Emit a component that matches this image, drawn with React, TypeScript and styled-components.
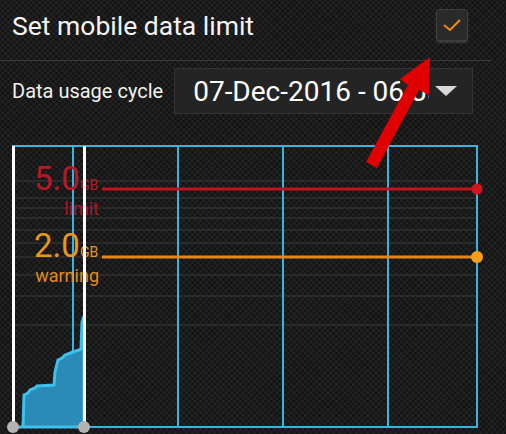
import styled, { createGlobalStyle } from "styled-components";

const GlobalStyle = createGlobalStyle`
  html, body {
    margin: 0;
    padding: 0;
    background: #1a1a1a;
  }
  * {
    box-sizing: border-box;
  }
`;

const gridRows = [181, 198, 208, 218, 230, 243, 257, 275, 296, 325];
const gridCols = [73, 178, 283, 388];

const usagePath =
    "M18,427 L23,427 L24,395 L28,393 L30,390 L35,388 L37,386 L54,385 L55,372 L58,360 L62,358 L65,355 L73,352 L79,350 L81,349 L82,322 L84,316 L84,427 Z";

export default function App(): JSX.Element {
    return (
        <Page>
            <GlobalStyle />
            <Header>
                <Title>Set mobile data limit</Title>
                <CheckBox>
                    <svg width="20" height="14" viewBox="0 0 20 14">
                        <polyline points="2,7 8,12 18,2" fill="none" stroke="#f08a1c" strokeWidth="2" />
                    </svg>
                </CheckBox>
            </Header>
            <CycleRow>
                <CycleLabel>Data usage cycle</CycleLabel>
                <Dropdown>
                    <DropdownText>07-Dec-2016 - 06-Jan-2017</DropdownText>
                    <Caret />
                </Dropdown>
            </CycleRow>
            <Chart>
                <svg width="506" height="294" viewBox="0 140 506 294">
                    {gridRows.map((y) => (
                        <line key={y} x1="13" x2="477" y1={y} y2={y} stroke="#3a3a3a" strokeWidth="1" />
                    ))}
                    <rect x="13" y="146" width="464" height="281" fill="none" stroke="#3cb2df" strokeWidth="2" />
                    {gridCols.map((x) => (
                        <line key={x} x1={x} x2={x} y1="146" y2="427" stroke="#3cb2df" strokeWidth="2" />
                    ))}
                    <path d={usagePath} fill="#2a8bb6" stroke="#3ec0ee" strokeWidth="3" strokeLinejoin="miter" />

                    <line x1="102" x2="477" y1="189" y2="189" stroke="#c0151f" strokeWidth="3" />
                    <circle cx="477" cy="189" r="5.5" fill="#d0141e" />
                    <line x1="102" x2="477" y1="257" y2="257" stroke="#e8861c" strokeWidth="3" />
                    <circle cx="477" cy="257" r="6" fill="#f5a01a" />

                    <text x="34" y="190" fill="#b8172a" fontFamily="Roboto, sans-serif" fontSize="33">5.0</text>
                    <text x="80" y="190" fill="#b8172a" fontFamily="Roboto, sans-serif" fontSize="14">GB</text>
                    <text x="99" y="215" fill="#a8162a" fontFamily="Roboto, sans-serif" fontSize="18" textAnchor="end">limit</text>
                    <text x="34" y="257" fill="#e8961c" fontFamily="Roboto, sans-serif" fontSize="33">2.0</text>
                    <text x="80" y="257" fill="#e8961c" fontFamily="Roboto, sans-serif" fontSize="14">GB</text>
                    <text x="99" y="282" fill="#e08a1c" fontFamily="Roboto, sans-serif" fontSize="18" textAnchor="end">warning</text>

                    <line x1="13.5" x2="13.5" y1="146" y2="427" stroke="#ffffff" strokeWidth="3" />
                    <line x1="84.5" x2="84.5" y1="146" y2="427" stroke="#ffffff" strokeWidth="3" />
                    <circle cx="13" cy="427" r="6" fill="#b3b3b3" />
                    <circle cx="84" cy="427" r="6" fill="#b3b3b3" />
                </svg>
            </Chart>
            <Arrow width="506" height="434" viewBox="0 0 506 434">
                <polygon
                    points="430,57 429,95 419,90 377,168 366,162 408,85 400,79"
                    fill="#e00000"
                />
            </Arrow>
        </Page>
    );
}

const Page = styled.div`
  position: relative;
  width: 506px;
  height: 434px;
  overflow: hidden;
  font-family: Roboto, "Noto Sans", sans-serif;
  color: #fff;
  background-color: #1b1b1b;
  background-image:
    repeating-linear-gradient(45deg, rgba(255, 255, 255, 0.035) 0 2px, transparent 2px 4px),
    repeating-linear-gradient(-45deg, rgba(0, 0, 0, 0.3) 0 2px, transparent 2px 4px);
`;

const Header = styled.div`
  display: flex;
  align-items: center;
  justify-content: space-between;
  height: 61px;
  margin-right: 15px;
  padding: 0 23px 0 12px;
  border-bottom: 1px solid #3c3c3c;
`;

const Title = styled.div`
  font-size: 26.5px;
  line-height: 1;
  padding-bottom: 8px;
  color: #f4f4f4;
`;

const CheckBox = styled.div`
  display: flex;
  align-items: center;
  justify-content: center;
  width: 32px;
  height: 32px;
  margin-bottom: 10px;
  background: #2a2a2a;
  border: 1px solid #3e3e3e;
  border-radius: 3px;
  box-shadow: 0 2px 2px rgba(120, 120, 120, 0.35);
`;

const CycleRow = styled.div`
  display: flex;
  align-items: center;
  gap: 11px;
  margin-top: 7px;
  padding-left: 12px;
`;

const CycleLabel = styled.div`
  font-size: 20px;
  color: #f0f0f0;
`;

const Dropdown = styled.div`
  display: flex;
  align-items: center;
  width: 299px;
  height: 46px;
  padding: 0 15px 0 18px;
  background: #242424;
  border: 1px solid #333;
`;

const DropdownText = styled.div`
  flex: 1;
  overflow: hidden;
  white-space: nowrap;
  font-size: 28px;
  color: #fff;
`;

const Caret = styled.div`
  width: 0;
  height: 0;
  margin-left: 6px;
  border-left: 11px solid transparent;
  border-right: 11px solid transparent;
  border-top: 10px solid #d8d8d8;
`;

const Chart = styled.div`
  margin-top: 26px;
  line-height: 0;
`;

const Arrow = styled.svg`
  position: absolute;
  left: 0;
  top: 0;
  pointer-events: none;
`;
